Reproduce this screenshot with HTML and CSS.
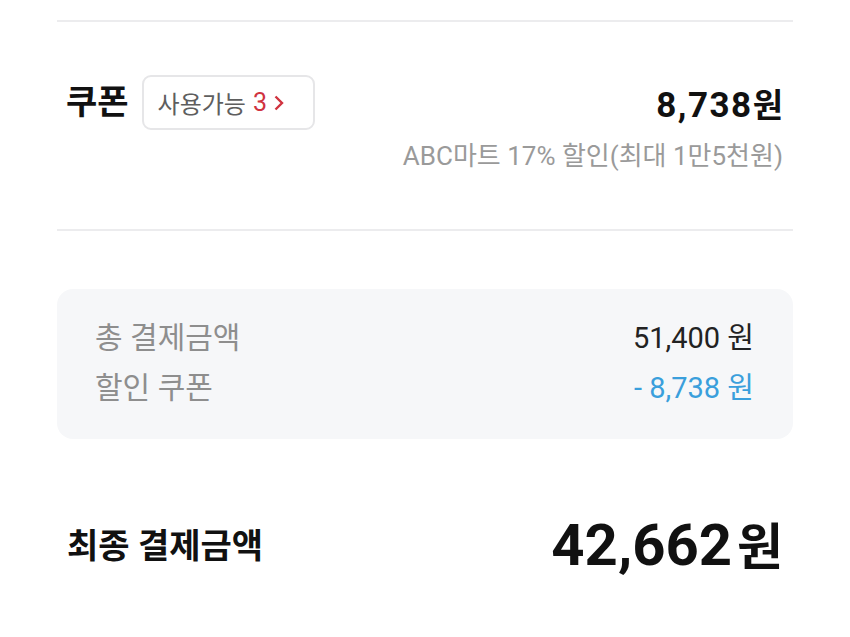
FILE: index.html
```html
<!DOCTYPE html>
<html lang="ko">
<head>
<meta charset="utf-8">
<link rel="stylesheet" href="styles.css">
</head>
<body>
<div class="page">
  <div class="divider first"></div>
  <section class="coupon">
    <div class="coupon-row">
      <div class="coupon-left">
        <span class="coupon-title">쿠폰</span>
        <button class="badge">사용가능 <span class="badge-count">3</span><svg class="chev" viewBox="0 0 11 18" width="11" height="18"><path d="M2.5 2.5 L9 9 L2.5 15.5" fill="none" stroke="#d0333f" stroke-width="2.4"/></svg></button>
      </div>
      <div class="coupon-amount">8,738<span class="won-sm">원</span></div>
    </div>
    <div class="coupon-desc">ABC마트 17% 할인(최대 1만5천원)</div>
  </section>
  <div class="divider"></div>
  <section class="summary">
    <div class="sum-row">
      <span class="sum-label">총 결제금액</span>
      <span class="sum-value">51,400 원</span>
    </div>
    <div class="sum-row">
      <span class="sum-label">할인 쿠폰</span>
      <span class="sum-value discount">- 8,738 원</span>
    </div>
  </section>
  <section class="final">
    <span class="final-label">최종 결제금액</span>
    <span class="final-value">42,662<span class="won">원</span></span>
  </section>
</div>
</body>
</html>
```
FILE: styles.css
```css
* { box-sizing: border-box; }
html, body { margin: 0; padding: 0; background: #fff; }
body {
  font-family: Roboto, "Noto Sans CJK KR", sans-serif;
  color: #111;
}
.page {
  width: 850px;
  padding: 0 57px;
}
.divider {
  height: 2px;
  background: #ececee;
}
.divider.first { margin-top: 20px; }
.coupon {
  padding: 53px 10px 0 9px;
  height: 207px;
}
.coupon-row {
  display: flex;
  align-items: center;
  justify-content: space-between;
}
.coupon-left {
  display: flex;
  align-items: center;
  gap: 13px;
}
.coupon-title {
  font-size: 34px;
  font-weight: 700;
  color: #111;
  line-height: 1.2;
}
.badge {
  display: inline-flex;
  align-items: center;
  height: 55px;
  padding: 0 29px 0 14px;
  border: 2px solid #e6e6e8;
  border-radius: 9px;
  background: #fff;
  font-family: Roboto, "Noto Sans CJK KR", sans-serif;
  font-size: 24px;
  color: #5e5e5e;
}
.badge-count {
  color: #d0333f;
  margin-left: 7px;
  margin-right: 6px;
  font-size: 25px;
}
.chev { display: block; }
.coupon-amount {
  font-size: 35px;
  font-weight: 700;
  color: #111;
  letter-spacing: 1.5px;
}
.won-sm { font-size: 33px; margin-left: 0; letter-spacing: 0; }
.coupon-desc {
  margin-top: 5px;
  text-align: right;
  font-size: 26px;
  color: #9a9a9a;
}
.summary {
  margin-top: 58px;
  background: #f6f7f9;
  border-radius: 16px;
  height: 150px;
  padding: 21px 39px 0 38px;
}
.sum-row {
  display: flex;
  justify-content: space-between;
  align-items: center;
  height: 50px;
  font-size: 29px;
}
.sum-label { color: #8e8e8e; font-size: 30px; }
.sum-value { color: #222; }
.sum-value.discount { color: #3a9fdc; }
.final {
  display: flex;
  justify-content: space-between;
  align-items: center;
  padding: 68px 10px 0 10px;
}
.final-label {
  font-size: 34px;
  font-weight: 700;
  color: #111;
}
.final-value {
  font-size: 58px;
  font-weight: 700;
  color: #111;
}
.won { margin-left: 5px; font-size: 50px; }
```
